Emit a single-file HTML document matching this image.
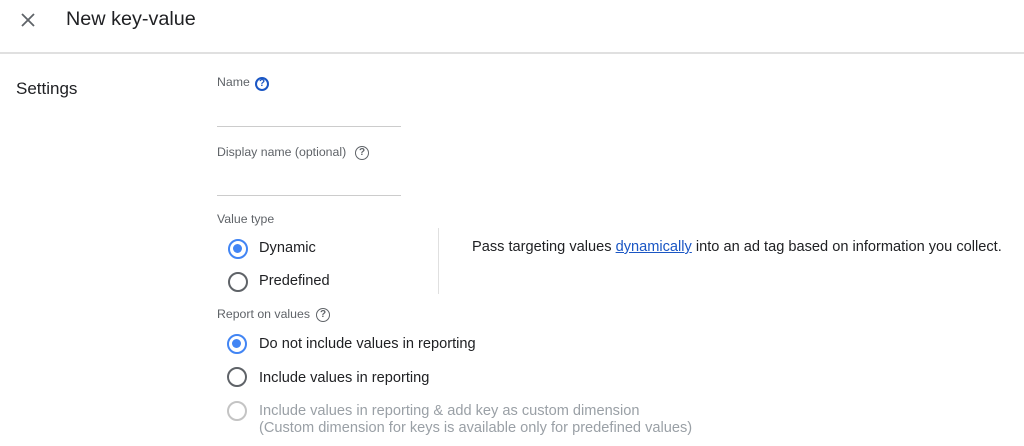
<!DOCTYPE html><html><head><style>
body{margin:0;width:1024px;height:446px;background:#fff;font-family:"Liberation Sans",Arial,sans-serif;position:relative;overflow:hidden}
.a{position:absolute;white-space:nowrap}
.lbl{font-size:12.3px;color:#5f6368}
.t{font-size:14.6px;color:#202124}
.r{position:absolute;width:18px;height:18px;border:2px solid #5f6368;border-radius:50%;box-sizing:border-box}
.r.on{border-color:#4285f4}
.r.on::after{content:"";position:absolute;left:3px;top:3px;width:9px;height:9px;border-radius:50%;background:#4285f4}
.r.dis{border-color:#c4c4c4}
.q{position:absolute;width:14px;height:14px;border:1.5px solid #5f6368;border-radius:50%;box-sizing:border-box;font-size:10px;font-weight:bold;color:#5f6368;text-align:center;line-height:11px}
</style></head><body>
<svg class="a" style="left:20px;top:12px" width="16" height="16" viewBox="0 0 16 16"><path d="M2 2L14 14M14 2L2 14" stroke="#5f6368" stroke-width="1.8"/></svg>
<div class="a" style="left:66px;top:8px;font-size:19.8px;color:#202124">New key-value</div>
<div class="a" style="left:0;top:52px;width:1024px;height:2px;background:#e0e0e0"></div>
<div class="a" style="left:16px;top:79px;font-size:17px;color:#202124">Settings</div>
<div class="a lbl" style="left:217px;top:75px">Name</div>
<div class="q" style="left:255px;top:77px;border-color:#1a56c4;color:#1a56c4;border-width:2px;line-height:10px">?</div>
<div class="a" style="left:217px;top:126px;width:184px;height:1px;background:#ccc"></div>
<div class="a lbl" style="left:217px;top:145px">Display name (optional)</div>
<div class="q" style="left:355px;top:146px">?</div>
<div class="a" style="left:217px;top:195px;width:184px;height:1px;background:#ccc"></div>
<div class="a lbl" style="left:217px;top:212px">Value type</div>
<div class="r on" style="left:228px;top:239px;width:20px;height:20px"></div>
<div class="a t" style="left:259px;top:240px">Dynamic</div>
<div class="r" style="left:228px;top:272px;width:20px;height:20px"></div>
<div class="a t" style="left:259px;top:273px">Predefined</div>
<div class="a" style="left:438px;top:228px;width:1px;height:66px;background:#e0e0e0"></div>
<div class="a t" style="left:472px;top:239px">Pass targeting values <span style="color:#1a56c4;text-decoration:underline">dynamically</span> into an ad tag based on information you collect.</div>
<div class="a lbl" style="left:217px;top:307px">Report on values</div>
<div class="q" style="left:316px;top:308px">?</div>
<div class="r on" style="left:227px;top:334px;width:20px;height:20px"></div>
<div class="a t" style="left:259px;top:336px">Do not include values in reporting</div>
<div class="r" style="left:227px;top:367px;width:20px;height:20px"></div>
<div class="a t" style="left:259px;top:370px">Include values in reporting</div>
<div class="r dis" style="left:227px;top:401px;width:20px;height:20px"></div>
<div class="a t" style="left:259px;top:403px;color:#9aa0a6;line-height:17px">Include values in reporting &amp; add key as custom dimension<br>(Custom dimension for keys is available only for predefined values)</div>
</body></html>
